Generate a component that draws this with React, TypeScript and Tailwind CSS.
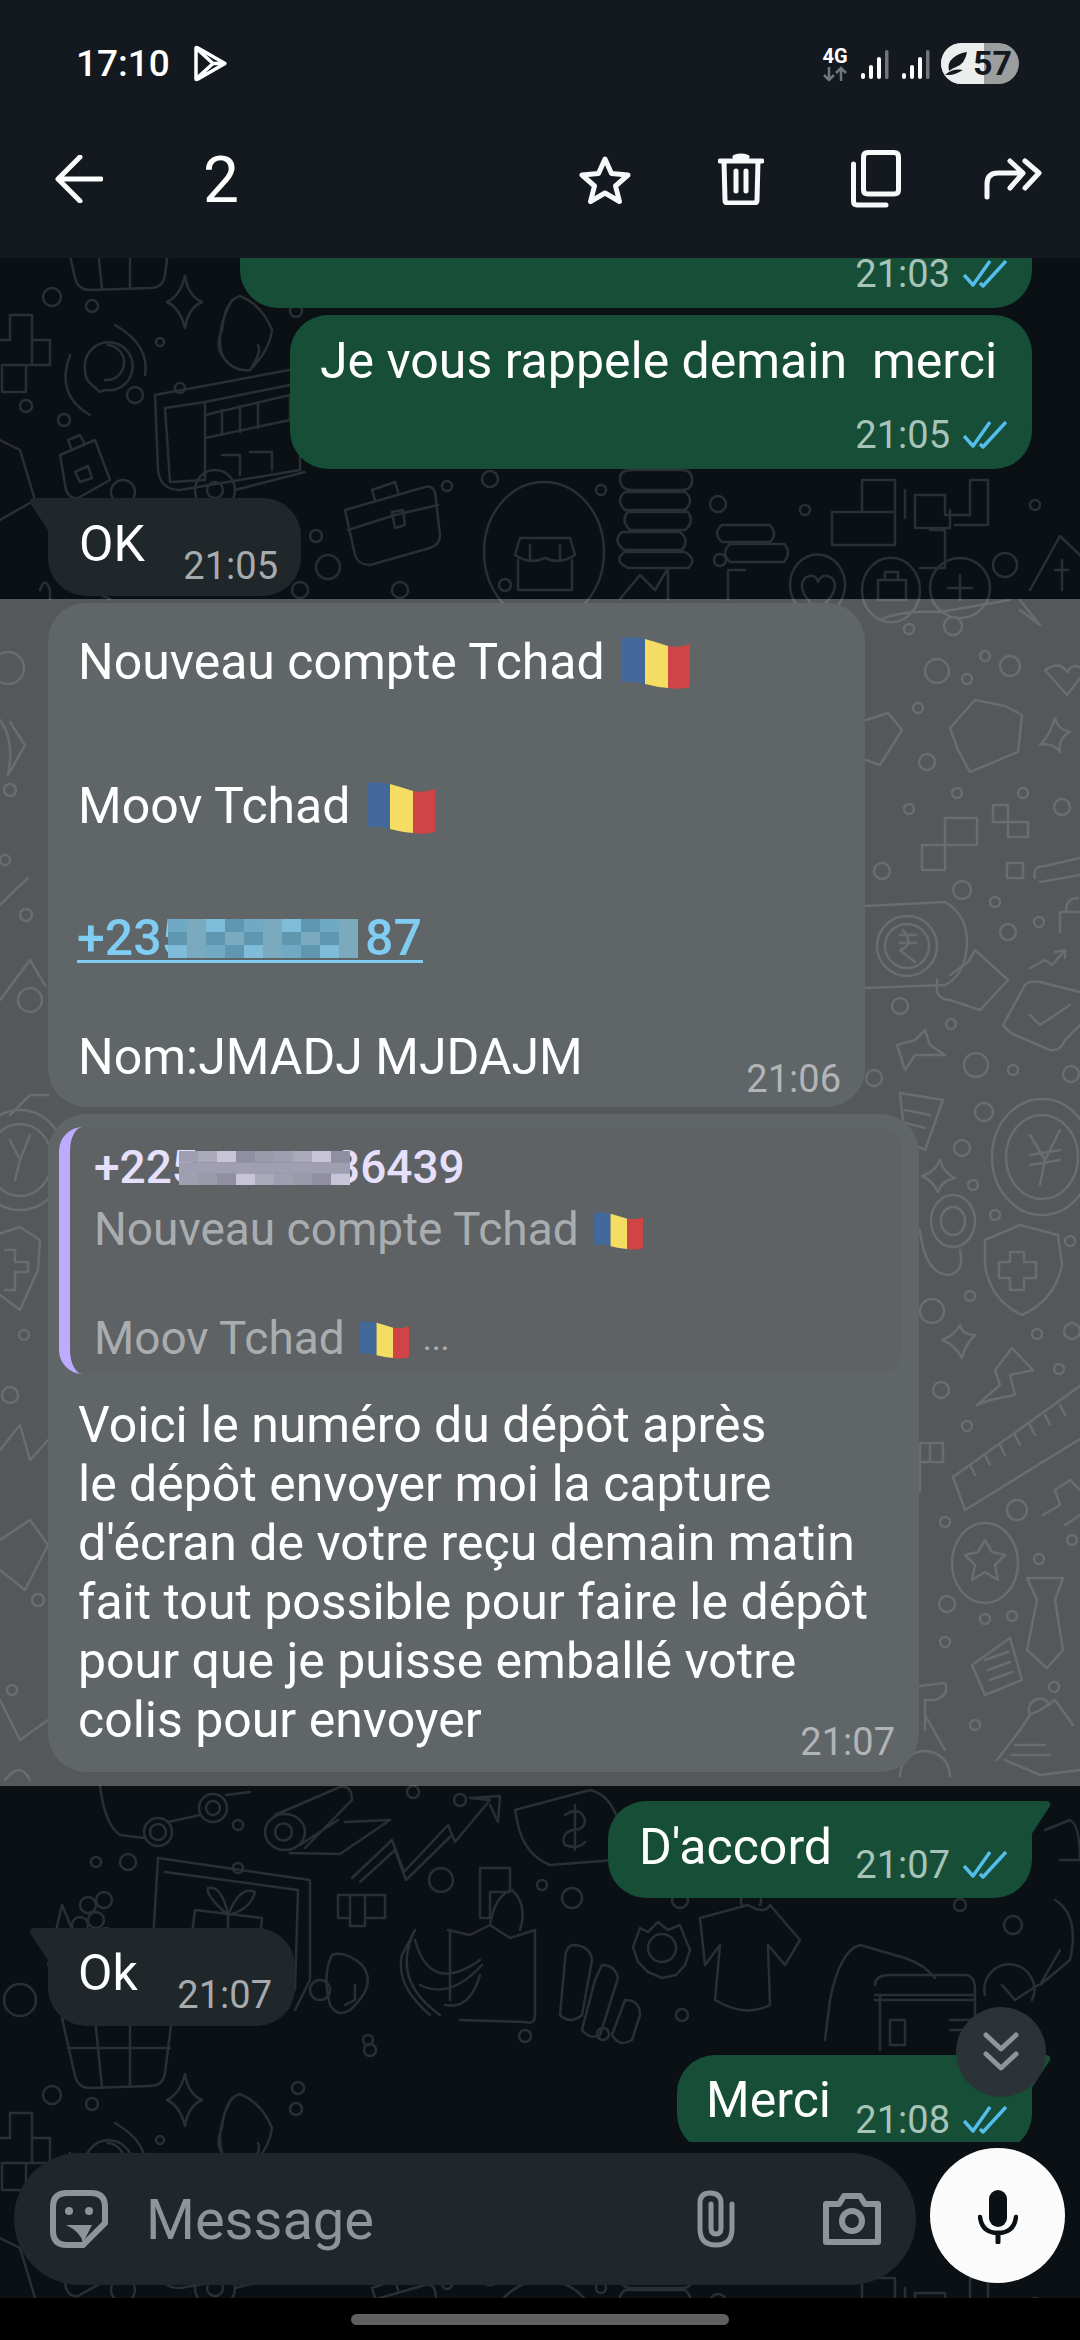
// App.tsx - WhatsApp dark chat with two selected messages
import React from 'react';

// wallpaper doodles, drawn in page coordinates
const TOP_DOTS: number[][] = [
  [52, 297, 9], [92, 306, 6], [296, 311, 6], [26, 406, 6], [64, 420, 6], [135, 395, 8], [123, 492, 12], [316, 536, 6],
  [447, 486, 5], [490, 479, 8], [601, 490, 5], [298, 290, 6], [328, 567, 12], [505, 585, 6], [718, 504, 8], [805, 510, 5], [1035, 505, 5],
  [400, 590, 8], [300, 590, 8], [1005, 565, 12], [260, 540, 6], [160, 342, 4], [180, 388, 5], [720, 560, 6],
];

const TOP_PATHS: string[] = [
  // basket
  'M62 220 L172 220 L165 275 Q163 288 150 288 L90 290 Q78 290 75 278 Z M95 220 L102 289 M130 220 L130 289 M68 250 L170 250',
  // sparkle
  'M185 276 Q188 296 202 302 Q188 308 185 328 Q180 308 167 302 Q180 296 185 276 Z',
  // taco
  'M222 330 Q225 300 240 296 Q262 305 272 330 Q270 350 250 370 Q232 372 222 355 Q215 345 222 330 Z M232 300 Q215 330 222 355 M250 370 Q262 352 258 345',
  // chat bubble with waves
  'M85 370 A24 24 0 1 1 105 390 L100 392 L92 385 Q85 380 85 370 Z M108 345 A8 8 0 0 1 105 380 M115 325 Q150 345 145 375 M70 355 Q55 395 90 415',
  // tetris
  'M10 315 H32 V340 H50 V365 H26 V392 H2 V365 H26 M10 315 V340 H0 M32 340 V365',
  // food truck
  'M155 395 L300 368 L300 470 L180 490 Q160 490 158 470 Z M165 408 L205 402 V480 L170 482 Z M205 402 L290 385 M205 415 L290 395 L290 420 L205 438 Z M222 410 V435 M240 406 V432 M258 403 V428 M222 455 H240 V475 M250 452 H272 V470',
  'M195 490 A20 20 0 1 0 235 490 A20 20 0 1 0 195 490 M207 490 A8 8 0 1 0 223 490 A8 8 0 1 0 207 490 M235 490 L305 472',
  // small case
  'M60 455 L95 440 L110 480 L78 498 Q70 500 66 490 Z M72 450 L68 440 L80 435 L85 444 M75 472 L88 466 L92 478 L80 482 Z',
  // big briefcase
  'M345 510 L425 487 Q432 485 435 492 L440 535 Q440 545 430 548 L370 565 Q358 565 355 555 Z M375 500 L372 490 L395 482 L398 492 M348 530 L395 515 L438 505 M392 512 L403 510 L405 525 L395 528 Z',
  // store badge
  'M484 552 A60 70 0 1 1 604 552 A60 70 0 1 1 484 552 Z M515 555 L520 538 H570 L575 555 Q560 565 545 558 Q530 565 515 555 Z M518 560 V590 H572 V560 M530 545 V560 M560 545 V560',
  // coin stacks
  'M620 478 Q620 470 632 470 H682 Q692 470 692 480 Q692 490 682 490 H632 Q620 490 620 478 Z M625 492 H685 Q695 500 685 510 H625 Q615 500 625 492 Z M628 512 H688 Q695 522 685 530 H630 Q620 520 628 512 Z M622 532 H680 Q690 540 682 550 H624 Q612 540 622 532 Z M625 552 H685 Q698 560 688 568 H628 Q612 560 625 552 Z',
  'M722 525 H770 Q778 535 770 542 H722 Q712 533 722 525 Z M730 544 H784 Q792 552 784 562 H730 Q720 553 730 544 Z',
  // tetris blocks
  'M832 512 H895 V545 H832 Z M862 512 V480 H895 V512 M915 495 H945 V515 H970 V480 H988 V525 H955 M915 495 V528 H950 V510 M905 490 V518 M930 530 H945 V568 H920',
  // heart, gift, plus circles
  'M790 585 A27 30 0 1 1 845 585 A27 30 0 1 1 790 585 M818 610 Q795 590 805 578 Q815 572 818 582 Q822 572 832 578 Q842 590 818 610',
  'M862 590 A27 30 0 1 1 920 590 A27 30 0 1 1 862 590 M878 580 H906 V600 H878 Z M885 580 V572 H898 V580',
  'M930 588 A30 30 0 1 1 990 588 A30 30 0 1 1 930 588 M960 575 V600 M948 588 H972',
  // dollar tag
  'M1030 590 L1060 536 L1085 560 M1062 560 V590 M1055 570 H1068',
  // star crown
  'M620 599 L640 575 L655 590 L668 568 L668 599 M745 570 H728 V599',
  // small doodles at left
  'M0 520 L35 500 L20 450 L0 440 M40 590 Q45 575 50 590 V599 M90 590 L110 599',
];

const LOWER_DOTS: number[][] = [
  [238, 1868, 5], [128, 1862, 8], [96, 1862, 5], [128, 1960, 5], [441, 1880, 12], [238, 1825, 5], [413, 1792, 6], [542, 1885, 5], [572, 1898, 10],
  [680, 1900, 8], [1013, 1925, 9], [682, 2015, 6], [960, 1905, 6], [603, 2034, 6], [370, 2050, 6], [525, 2036, 6], [1000, 1850, 6], [460, 1800, 6],
  [368, 2040, 5], [20, 2000, 16], [320, 1990, 10],
];

const LOWER_PATHS: string[] = [
  // line graph
  'M100 1786 Q105 1825 120 1835 L145 1838 M168 1822 L200 1815 M226 1795 L250 1792',
  'M144 1832 A14 14 0 1 0 172 1832 A14 14 0 1 0 144 1832 M150 1832 A8 8 0 1 0 166 1832 A8 8 0 1 0 150 1832 M199 1808 A14 14 0 1 0 227 1808 A14 14 0 1 0 199 1808 M206 1808 A7 7 0 1 0 220 1808 A7 7 0 1 0 206 1808',
  // roll of cloth
  'M265 1832 A20 18 0 1 0 305 1832 A20 18 0 1 0 265 1832 M275 1832 A8 8 0 1 0 292 1832 A8 8 0 1 0 275 1832 M275 1815 L340 1787 Q352 1785 352 1800 L305 1848 M290 1853 L340 1854 L390 1820 L345 1822 M300 1845 L338 1820',
  // rising arrow
  'M352 1878 L392 1840 L404 1872 L448 1825 L455 1842 L490 1800 L470 1798 L500 1796 L498 1822 L490 1805 M360 1882 L395 1850 L406 1880 L452 1835',
  // receipt with dollar
  'M515 1810 L590 1790 Q610 1795 618 1820 L615 1860 L550 1865 Q525 1855 518 1825 Z M575 1805 V1850 M565 1815 Q580 1805 585 1820 Q585 1830 572 1830 Q560 1835 565 1845 Q578 1850 585 1842',
  // framed gift
  'M158 1858 L310 1880 V1980 L295 2010 M165 1872 L298 1890 L295 1990 M158 1858 L150 1990 M195 1910 L262 1918 L258 1960 L190 1950 Z M228 1915 V1990 M190 1950 L192 1990 M262 1960 L260 1995 M228 1915 Q205 1895 208 1888 Q222 1885 228 1915 Q240 1885 255 1892 Q250 1910 228 1915',
  // grapes and kite
  'M48 1965 L62 1905 L85 1960 M80 1905 A8 8 0 1 1 96 1905 A8 8 0 1 1 80 1905 M96 1900 A8 8 0 1 1 112 1900 A8 8 0 1 1 96 1900 M88 1920 A8 8 0 1 1 104 1920 A8 8 0 1 1 88 1920 M72 1925 A8 8 0 1 1 88 1925 A8 8 0 1 1 72 1925 M98 1936 A8 8 0 1 1 114 1936 A8 8 0 1 1 98 1936',
  // little tetris
  'M338 1895 H385 V1918 H365 V1926 H350 V1918 H338 Z M350 1895 V1918 M365 1895 V1918 M480 1868 H510 V1892 H490 V1918 H480 Z',
  // banana and bag
  'M448 1930 L470 1935 L490 1925 L510 1938 L535 1930 V2015 Q535 2025 525 2022 L460 2020 M450 1930 V2000 M490 1925 Q495 1895 512 1890 Q528 1905 520 1930 M415 1930 Q390 1980 440 2015 M415 1930 L402 1955 Q395 1985 430 2015 M415 1940 Q430 1995 480 1960 M420 1985 Q450 2000 482 1965 M445 2005 Q470 2010 480 1975',
  // loaf and pills
  'M332 1955 Q345 1950 362 1965 Q378 1985 350 2010 Q338 2018 330 2005 Q322 1975 332 1955 Z M345 2005 L355 2000 V1985',
  'M572 1945 Q590 1945 592 1960 L582 2015 Q570 2025 560 2015 L565 1960 Q565 1948 572 1945 Z M602 1965 Q615 1965 618 1978 L600 2035 Q590 2040 582 2030 L595 1980 Z M625 2000 Q640 2000 640 2015 L632 2040 Q620 2048 612 2035 Z',
  // gear
  'M633 1947 L640 1928 L648 1932 L658 1922 L668 1930 L680 1925 L685 1938 L690 1950 L685 1965 L676 1975 L662 1978 L648 1972 L638 1962 Z M648 1948 A14 14 0 1 0 676 1948 A14 14 0 1 0 648 1948',
  // t-shirt
  'M700 1918 L748 1905 Q765 1915 770 1905 L800 1940 L785 1965 L768 1945 L770 2005 Q745 2018 715 2000 L720 1945 L705 1965 Z M742 1905 A10 10 0 1 1 760 1905',
  // phone and card
  'M830 2000 Q840 1950 860 1945 L905 1958 Q925 1965 935 1978 M830 2000 L825 2040 M880 1995 V2050 M875 1985 Q875 1975 890 1975 H965 Q975 1975 975 1990 V2050 M875 2000 H975 M875 1995 H975 M890 2020 H905 V2045 H890 Z M950 2020 H975 M950 2030 H970',
  // clock tag
  'M985 1995 A25 25 0 1 1 1032 2000 M1002 1985 L1015 2000 L1038 1985',
  // right side leaf
  'M1055 1900 Q1080 1915 1070 1960 L1040 1985 L1060 1950 M1045 1830 L1070 1820 Q1080 1825 1080 1860 L1060 1860',
];

// parts of the wallpaper seen through the selected band
const BAND_DOTS: number[][] = [
  [909, 629, 5], [953, 626, 9], [937, 671, 12], [967, 679, 5], [985, 656, 5], [1010, 666, 10], [918, 708, 5], [927, 762, 8],
  [909, 809, 5], [957, 793, 5], [1023, 793, 5], [1062, 807, 8], [882, 871, 8], [962, 890, 9], [995, 902, 5], [1008, 932, 8], [1039, 922, 5],
  [900, 1006, 8], [951, 1024, 5], [976, 1065, 12], [1013, 1070, 5], [1071, 1074, 8], [874, 1078, 8], [984, 1112, 9], [962, 1148, 8], [973, 1185, 5],
  [995, 1215, 5], [1070, 1241, 5], [970, 1296, 5], [932, 1311, 12], [1037, 1334, 5], [1072, 1331, 8], [941, 1390, 8], [1059, 1369, 5], [967, 1426, 5],
  [1017, 1510, 10], [1072, 1540, 5], [945, 1522, 5], [1039, 1559, 5], [947, 1604, 8], [985, 1619, 5], [1012, 1616, 5], [945, 1642, 5], [1054, 1687, 5], [975, 1725, 5],
  [8, 668, 16], [10, 790, 6], [26, 915, 6], [24, 1335, 5], [10, 1395, 8], [30, 1000, 12], [5, 860, 5], [38, 1600, 6], [12, 1690, 5],
];

const BAND_PATHS: string[] = [
  // scissors and heart, top right
  'M880 620 Q900 610 940 612 L1010 600 M1020 600 L1040 625 L1020 610 M1045 670 Q1060 660 1067 672 Q1075 660 1085 672 L1067 695 Z',
  // folder
  'M950 728 L975 700 L1005 706 L1022 715 L1018 752 L970 772 L958 750 Z',
  // sparkle
  'M1055 718 Q1058 730 1070 732 Q1058 738 1060 752 Q1052 742 1040 745 Q1050 735 1055 718 Z',
  // tag
  'M866 720 L888 713 L902 730 L880 765 L866 760',
  // tetris
  'M922 845 H945 V870 H922 Z M945 845 V818 H977 V845 H945 M993 805 H1008 V822 H1028 V837 H1008 V822 H993 Z M1007 863 H1023 V878 H1007 Z',
  // thermometer and lock
  'M1035 878 Q1032 866 1045 866 L1080 858 M1040 882 L1080 875 M1060 932 V912 H1080 M1066 912 Q1066 898 1078 898',
  // rupee tag
  'M865 906 L945 902 Q968 915 967 945 Q965 975 945 985 L865 988 M877 946 A30 30 0 1 0 937 946 A30 30 0 1 0 877 946 M885 946 A22 22 0 1 0 929 946 A22 22 0 1 0 885 946 M900 935 H916 M900 943 H916 M903 930 Q915 945 900 950 L915 962',
  // arrow card
  'M937 980 V992 Q940 1000 950 1000 L980 1010 L1008 980 L975 950 L968 962 L950 975',
  // check card
  'M1003 1025 L1025 985 Q1030 980 1040 982 L1080 992 M1003 1025 Q1008 1032 1015 1035 L1050 1050 Q1060 1052 1065 1040 L1080 1025 M1030 1015 L1040 1025 L1070 1005',
  'M1030 968 L1045 960 L1052 965 L1065 950 M1055 952 L1065 950 L1065 958',
  // bottle pin
  'M897 1045 L915 1040 L925 1030 L930 1045 L945 1055 L915 1055 L905 1070 Z',
  // receipt
  'M900 1093 L943 1100 L925 1150 L905 1140 Z M905 1110 L930 1115 M902 1122 L925 1128',
  // yen coin
  'M992 1157 A50 58 0 1 0 1092 1157 A50 58 0 1 0 992 1157 M1006 1157 A36 42 0 1 0 1078 1157 A36 42 0 1 0 1006 1157 M1030 1135 L1045 1160 L1060 1130 M1045 1160 L1040 1185 M1030 1155 L1060 1150 M1030 1165 L1060 1160',
  // sparkles
  'M922 1176 Q935 1172 940 1160 Q943 1172 955 1178 Q942 1180 938 1192 Q932 1180 922 1176 Z M942 1340 Q955 1335 960 1325 Q962 1335 975 1335 Q965 1345 962 1358 Q955 1345 942 1340 Z',
  // target blob
  'M931 1221 A22 26 0 1 0 975 1221 A22 26 0 1 0 931 1221 M941 1221 A12 14 0 1 0 965 1221 A12 14 0 1 0 941 1221 M920 1230 Q925 1275 950 1275 Q965 1270 960 1250',
  // shield plus
  'M985 1240 L1020 1225 L1058 1235 L1062 1265 Q1055 1300 1022 1315 Q990 1300 985 1265 Z M1010 1252 H1024 V1262 H1036 V1278 H1024 V1290 H1010 V1278 H999 V1262 H1010 Z',
  // push pin
  'M977 1405 L1000 1385 L995 1370 L1012 1348 L1033 1370 L1010 1375 L1015 1395 L990 1400 Z',
  // ruler
  'M953 1477 L1080 1386 M965 1510 L1080 1439 M953 1477 L965 1510 M970 1465 L975 1475 M985 1455 L990 1465 M1000 1445 L1005 1455 M1015 1435 L1020 1445 M1030 1425 L1035 1435 M1045 1415 L1050 1425 M1060 1405 L1065 1415',
  // flag tetris
  'M920 1462 H943 V1443 H920 V1491 M930 1443 V1462',
  // pin small
  'M1043 1515 L1060 1505 L1055 1490 L1070 1480 L1080 1490 M1065 1525 L1080 1515',
  // star coin
  'M952 1563 A33 40 0 1 0 1018 1563 A33 40 0 1 0 952 1563 M985 1540 L992 1552 L1005 1555 L995 1565 L998 1580 L985 1572 L972 1580 L975 1565 L965 1555 L978 1552 Z',
  // tie
  'M1027 1578 H1063 L1055 1600 L1063 1650 L1047 1668 L1027 1650 L1037 1600 Z',
  // list receipt
  'M972 1665 L1010 1638 L1022 1680 L985 1695 Z M985 1660 L1008 1652 M988 1670 L1010 1662 M990 1680 L1012 1672',
  // bottle
  'M997 1760 L1020 1730 L1030 1715 L1040 1710 L1055 1700 L1073 1725 M1030 1715 A8 8 0 1 1 1050 1705 M1005 1760 L1040 1775 L1080 1770 M1015 1745 H1045 M1012 1755 H1050',
  // scooter
  'M920 1686 L945 1683 Q950 1695 935 1700 L925 1700 V1730 M900 1776 A25 25 0 0 1 950 1776 M925 1715 L945 1750',
  // left side shapes
  'M0 1000 L30 960 L45 985 M10 1115 L30 1095 L48 1095 M0 720 Q15 740 8 775 L25 745 L10 722 M0 905 L15 890 L28 878',
  'M-25 1160 A45 50 0 1 0 65 1160 A45 50 0 1 0 -25 1160 M-12 1160 A32 36 0 1 0 52 1160 A32 36 0 1 0 -12 1160 M10 1140 L20 1160 L30 1135 M20 1160 L15 1180',
  'M-5 1235 L20 1227 L40 1240 L38 1270 L20 1310 L0 1295 M5 1250 H15 V1262 H28 V1272 H15 V1290 H5',
  'M0 1450 L20 1425 L30 1460 L48 1440 M0 1540 L30 1520 L48 1545 L25 1590 L0 1570 M0 1700 L20 1740 L48 1720 M5 1780 Q20 1760 30 1780',
];

function Doodles({ dots, paths }: { dots: number[][]; paths: string[] }) {
  return (
    <>
      {paths.map((d, i) => (
        <path key={i} d={d} />
      ))}
      {dots.map(([cx, cy, r], i) => (
        <circle key={i} cx={cx} cy={cy} r={r} />
      ))}
    </>
  );
}

function Wallpaper() {
  return (
    <svg className="absolute inset-0 w-full h-full" viewBox="0 258 1080 2040" fill="none" stroke="#2a2f33" strokeWidth="2.5" strokeLinejoin="round" strokeLinecap="round">
      <Doodles dots={TOP_DOTS} paths={TOP_PATHS} />
      <Doodles dots={LOWER_DOTS} paths={LOWER_PATHS} />
      <Doodles dots={BAND_DOTS} paths={BAND_PATHS} />
      <g transform="translate(0 1798)">
        <Doodles dots={TOP_DOTS} paths={TOP_PATHS} />
      </g>
    </svg>
  );
}

// blurred out digits in the phone numbers
function Mosaic({ w, h, cols, rows, colors, className }: { w: number; h: number; cols: number; rows: number; colors: string[]; className?: string }) {
  const cells = [];
  for (let c = 0; c < cols; c++) {
    for (let r = 0; r < rows; r++) {
      cells.push(<rect key={c + '-' + r} x={c} y={r} width="1.02" height="1.02" fill={colors[(c * 7 + r * 5 + c * r * 3) % colors.length]} />);
    }
  }
  return (
    <svg width={w} height={h} viewBox={`0 0 ${cols} ${rows}`} preserveAspectRatio="none" className={className}>
      {cells}
    </svg>
  );
}

function ChadFlag({ className }: { className: string }) {
  return (
    <svg viewBox="0 0 68 52" className={className}>
      <path d="M0 1 Q10 -1 23 2 V47 Q10 44 0 45 Z" fill="#43689a" />
      <path d="M23 2 Q34 5 46 9 V51 Q34 50 23 47 Z" fill="#f4dd62" />
      <path d="M46 9 Q58 11 68 7 V50 Q58 53 46 51 Z" fill="#cf4545" />
    </svg>
  );
}

function Ticks() {
  return (
    <svg width="44" height="28" viewBox="0 0 44 28" fill="none" stroke="#53bdeb" strokeWidth="3.5" strokeLinejoin="round" className="ml-[13px]">
      <path d="M1 15 L10 25 L27 1" />
      <path d="M17 23 L20 26 L43 1" />
    </svg>
  );
}

function SentMeta({ time }: { time: string }) {
  return (
    <div className="flex items-center">
      <span className="text-[38px] leading-[44px] text-[#a6c4b7]">{time}</span>
      <Ticks />
    </div>
  );
}

function Tail({ side, color }: { side: 'left' | 'right'; color: string }) {
  if (side === 'right') {
    return (
      <svg width="20" height="34" viewBox="0 0 20 34" className="absolute top-0 -right-[19px]" fill={color}>
        <path d="M0 0 H15 Q20 0 19 5 L0 34 Z" />
      </svg>
    );
  }
  return (
    <svg width="20" height="34" viewBox="0 0 20 34" className="absolute top-0 -left-[19px]" fill={color}>
      <path d="M20 0 H5 Q0 0 1 5 L20 34 Z" />
    </svg>
  );
}

const BODY_LINES = [
  'Voici le numéro du dépôt après',
  'le dépôt envoyer moi la capture',
  "d'écran de votre reçu demain matin",
  'fait tout possible pour faire le dépôt',
  'pour que je puisse emballé votre',
];

function MessageList() {
  return (
    <div className="relative h-[1884px] overflow-hidden text-[50px] leading-[59px] text-white">
      {/* cut off bubble at the top */}
      <div className="flex justify-end pr-[48px]">
        <div className="w-[792px] h-[50px] rounded-b-[38px] bg-[#164e38] flex items-start justify-end pr-[25px]">
          <div className="flex items-center mt-[2px]">
            <span className="text-[38px] leading-[28px] text-[#a6c4b7]">21:03</span>
            <Ticks />
          </div>
        </div>
      </div>

      <div className="flex justify-end pr-[48px] mt-[7px]">
        <div className="w-[742px] h-[154px] rounded-[38px] bg-[#164e38] pl-[30px] pr-[25px] pt-[17px]">
          <div className="whitespace-pre">Je vous rappele demain  merci</div>
          <div className="flex justify-end mt-[22px]">
            <SentMeta time="21:05" />
          </div>
        </div>
      </div>

      <div className="pl-[48px] mt-[29px]">
        <div className="relative w-[253px] h-[98px] rounded-[38px] rounded-tl-none bg-[#1f272a] pl-[31px] pr-[23px] flex justify-between">
          <Tail side="left" color="#1f272a" />
          <span className="mt-[17px]">OK</span>
          <span className="mt-[46px] text-[38px] leading-[44px] text-[#a8abad]">21:05</span>
        </div>
      </div>

      {/* selected messages */}
      <div className="mt-[3px] h-[1187px] bg-white/30 pl-[48px] pt-[4px] flex flex-col gap-[7px]">
        <div className="w-[817px] h-[504px] shrink-0 rounded-[38px] bg-[#606568] pl-[30px] pr-[24px] pt-[30px]">
          <div className="flex items-start">
            <span>Nouveau compte Tchad</span>
            <ChadFlag className="w-[68px] h-[52px] ml-[17px] mt-[4px]" />
          </div>
          <div className="flex items-start mt-[85px]">
            <span>Moov Tchad</span>
            <ChadFlag className="w-[68px] h-[52px] ml-[16px] mt-[5px]" />
          </div>
          <div className="mt-[73px] -ml-[1px] w-[346px] h-[54px] flex font-medium text-[#7fcdf2] border-b-[3px] border-[#7fcdf2]">
            <span>+235</span>
            <Mosaic w={190} h={39} cols={10} rows={3} colors={['#6fa9c4', '#5f96b0', '#7fbcd9', '#7ba9be']} className="relative z-10 -ml-[22px] mt-[10px]" />
            <span className="ml-[7px]">87</span>
          </div>
          <div className="flex justify-between mt-[65px]">
            <span>Nom:JMADJ MJDAJM</span>
            <span className="mt-[29px] text-[38px] leading-[44px] text-[#b2b5b7]">21:06</span>
          </div>
        </div>

        <div className="w-[871px] h-[658px] shrink-0 rounded-[38px] bg-[#606568] pl-[11px] pr-[17px] pt-[13px]">
          <div className="h-[247px] rounded-[24px] bg-[#5e6265] border-l-[11px] border-[#bcabff] pl-[24px] pt-[13px] text-[46px] leading-[54px]">
            <div className="flex font-medium text-[#e6e0fd]">
              <span>+225</span>
              <Mosaic w={171} h={34} cols={9} rows={3} colors={['#9f9fb1', '#8f8fa1', '#a9a9ba', '#9a9aab', '#c6c4d6']} className="relative z-10 -ml-[19px] mt-[11px]" />
              <span className="-ml-[16px]">36439</span>
            </div>
            <div className="flex items-start mt-[8px] text-[#a9adaf]">
              <span>Nouveau compte Tchad</span>
              <ChadFlag className="w-[49px] h-[38px] ml-[15px] mt-[10px]" />
            </div>
            <div className="flex items-start mt-[55px] text-[#a9adaf]">
              <span>Moov Tchad</span>
              <ChadFlag className="w-[49px] h-[38px] ml-[15px] mt-[10px]" />
              <span className="ml-[14px] text-[34px]">...</span>
            </div>
          </div>
          <div className="pl-[19px] pr-[7px] mt-[22px] whitespace-nowrap">
            {BODY_LINES.map((line) => (
              <div key={line}>{line}</div>
            ))}
            <div className="flex justify-between">
              <span>colis pour envoyer</span>
              <span className="mt-[29px] text-[38px] leading-[44px] text-[#b2b5b7]">21:07</span>
            </div>
          </div>
        </div>
      </div>

      <div className="flex justify-end pr-[48px] mt-[15px]">
        <div className="relative w-[424px] h-[97px] rounded-[38px] rounded-tr-none bg-[#164e38] pl-[31px] pr-[25px] flex justify-between">
          <Tail side="right" color="#164e38" />
          <span className="mt-[17px]">D'accord</span>
          <div className="mt-[42px]">
            <SentMeta time="21:07" />
          </div>
        </div>
      </div>

      <div className="pl-[48px] mt-[30px]">
        <div className="relative w-[247px] h-[98px] rounded-[38px] rounded-tl-none bg-[#1f272a] pl-[30px] pr-[23px] flex justify-between">
          <Tail side="left" color="#1f272a" />
          <span className="mt-[16px]">Ok</span>
          <span className="mt-[45px] text-[38px] leading-[44px] text-[#a8abad]">21:07</span>
        </div>
      </div>

      <div className="flex justify-end pr-[48px] mt-[29px]">
        <div className="relative w-[355px] h-[97px] rounded-[38px] rounded-tr-none bg-[#164e38] pl-[29px] pr-[25px] flex justify-between">
          <Tail side="right" color="#164e38" />
          <span className="mt-[16px]">Merci</span>
          <div className="mt-[43px]">
            <SentMeta time="21:08" />
          </div>
        </div>
      </div>
    </div>
  );
}

function StatusBar() {
  return (
    <div className="h-[86px] flex items-start pl-[76px] pr-[61px] pt-[43px]">
      <span className="text-[37px] leading-[43px] font-medium text-white -mt-[1px]">17:10</span>
      <svg width="35" height="37" viewBox="0 0 35 37" fill="none" stroke="white" strokeWidth="3.5" strokeLinejoin="round" className="ml-[23px] mt-[2px]">
        <path d="M3 3 Q3 2 5 3 L32 18.5 L5 34 Q3 35 3 34 Z M3 3 L20 18.5 L3 34 M20 18.5 L30 18.5" />
      </svg>
      <div className="ml-auto flex items-start">
        <div className="w-[26px] flex flex-col items-center mt-[4px]">
          <span className="text-[20px] leading-[18px] font-bold text-white">4G</span>
          <svg width="26" height="16" viewBox="0 0 26 16" fill="none" stroke="#71767a" strokeWidth="2.5" className="mt-[1px]">
            <path d="M7 1 V14 M2 9 L7 14 L12 9" />
            <path d="M19 15 V2 M14 7 L19 2 L24 7" />
          </svg>
        </div>
        <svg width="28" height="30" viewBox="0 0 28 30" className="ml-[13px] mt-[7px]">
          <rect x="0" y="23" width="4" height="6" rx="2" fill="white" />
          <rect x="8" y="15" width="4" height="14" rx="2" fill="white" />
          <rect x="16" y="7" width="4" height="22" rx="2" fill="white" />
          <rect x="24" y="0" width="3.5" height="29" rx="1.5" fill="#70757a" />
        </svg>
        <svg width="28" height="30" viewBox="0 0 28 30" className="ml-[13px] mt-[7px]">
          <rect x="0" y="23" width="4" height="6" rx="2" fill="white" />
          <rect x="8" y="15" width="4" height="14" rx="2" fill="white" />
          <rect x="16" y="7" width="4" height="22" rx="2" fill="white" />
          <rect x="24" y="0" width="3.5" height="29" rx="1.5" fill="#70757a" />
        </svg>
        <div className="relative w-[78px] h-[41px] ml-[11px] rounded-full overflow-hidden flex items-center bg-[#9b9d9f]">
          <div className="absolute left-0 top-0 bottom-0 w-[43px] bg-[#eceeee]" />
          <svg width="22" height="26" viewBox="0 0 22 26" fill="#15191c" className="relative ml-[4px]">
            <path d="M22 1 Q20 13 11 16 Q8 17 4 20 Q2 12 8 7 Q14 2 22 1 Z M0 24 Q8 17 18 19 Q10 24 4 24 Z" />
          </svg>
          <span className="relative ml-[6px] text-[34px] leading-[41px] font-bold text-[#15191c]">57</span>
        </div>
      </div>
    </div>
  );
}

function Toolbar() {
  return (
    <div className="h-[172px] pt-[14px] flex items-center">
      <svg width="48" height="48" viewBox="0 0 48 48" fill="none" stroke="white" strokeWidth="5" strokeLinecap="round" strokeLinejoin="round" className="ml-[55px]">
        <path d="M46 24 H4 M25 2 L3 24 L25 46" />
      </svg>
      <span className="ml-[100px] text-[64px] leading-[75px] text-white mt-[2px]">2</span>
      <svg width="52" height="48" viewBox="0 0 52 48" fill="none" stroke="#f6f8fa" strokeWidth="5" strokeLinejoin="round" className="ml-[340px] mt-[2px]">
        <path d="M26 3 L32.5 17.5 L49 19 L36.5 30 L40.5 45.5 L26 37 L11.5 45.5 L15.5 30 L3 19 L19.5 17.5 Z" />
      </svg>
      <svg width="46" height="52" viewBox="0 0 46 52" fill="none" stroke="#f6f8fa" strokeWidth="5" strokeLinecap="round" strokeLinejoin="round" className="ml-[87px]">
        <path d="M2 8 H44 M17 4 Q23 2 29 4 M6 8 L7 47 Q7 50 10 50 H36 Q39 50 39 47 L40 8 M18 18 V38 M28 18 V38" />
      </svg>
      <svg width="50" height="58" viewBox="0 0 50 58" fill="none" stroke="#f6f8fa" strokeWidth="5" strokeLinecap="round" strokeLinejoin="round" className="ml-[87px]">
        <path d="M17 2.5 H43 Q47.5 2.5 47.5 7 V40 Q47.5 44 43 44 H17 Q12.5 44 12.5 40 V7 Q12.5 2.5 17 2.5 Z" />
        <path d="M2.5 14 V51 Q2.5 55 6 55 H35" />
      </svg>
      <svg width="58" height="42" viewBox="0 0 58 42" fill="none" stroke="#f6f8fa" strokeWidth="5" strokeLinecap="round" strokeLinejoin="round" className="ml-[83px]">
        <path d="M3 39 V26 Q3 15 14 15 H38 M26 3 L39 15 L26 30" />
        <path d="M41 3 L55 15 L41 30" />
      </svg>
    </div>
  );
}

function Composer() {
  return (
    <div className="relative flex items-start pl-[14px] pt-[6px]">
      <div className="w-[902px] h-[132px] mt-[5px] rounded-full bg-[#1f272a] flex items-center pl-[36px] pr-[35px] text-[#8d9599]">
        <svg width="58" height="58" viewBox="0 0 58 58" fill="none" stroke="#8d9599" strokeWidth="6">
          <path d="M17 3 H41 Q55 3 55 17 V33 L33 55 H17 Q3 55 3 41 V17 Q3 3 17 3 Z" />
          <circle cx="19" cy="21" r="4" fill="#8d9599" stroke="none" />
          <circle cx="39" cy="21" r="4" fill="#8d9599" stroke="none" />
          <path d="M16 35 L42 35 L33 53 Q31 42 16 35 Z" fill="#8d9599" stroke="none" />
        </svg>
        <span className="ml-[38px] text-[56px] leading-[60px] mt-[2px]">Message</span>
        <svg width="38" height="58" viewBox="0 0 38 58" fill="none" stroke="#8d9599" strokeWidth="5" strokeLinecap="round" className="ml-auto">
          <path d="M35 14 V39 Q35 55 19 55 Q3 55 3 39 V13 Q3 3 13 3 Q24 3 24 13 V38 Q24 44 19 44 Q14 44 14 38 V14" />
        </svg>
        <svg width="58" height="52" viewBox="0 0 58 52" fill="none" stroke="#8d9599" strokeWidth="6" strokeLinejoin="round" className="ml-[88px]">
          <path d="M3 11 H16 L21 3 H37 L42 11 H55 V49 H3 Z" />
          <circle cx="29" cy="28" r="10" />
        </svg>
      </div>
      <div className="w-[135px] h-[135px] ml-[14px] rounded-full bg-[#fbfbfb] flex items-center justify-center">
        <svg width="40" height="54" viewBox="0 0 40 54" fill="none" className="mt-[2px]">
          <rect x="11" y="0" width="18" height="37" rx="9" fill="#0b1014" />
          <path d="M2 27 Q4 43 20 43 Q36 43 38 27" stroke="#0b1014" strokeWidth="4.5" strokeLinecap="round" />
          <path d="M20 43 V52" stroke="#0b1014" strokeWidth="5" strokeLinecap="round" />
        </svg>
      </div>
    </div>
  );
}

export default function App() {
  return (
    <div className="w-[1080px] h-[2340px] flex flex-col bg-black font-[Roboto,sans-serif] overflow-hidden">
      <div className="bg-[#13191e]">
        <StatusBar />
        <Toolbar />
      </div>

      <div className="relative h-[2040px] bg-[#0b1014]">
        <Wallpaper />
        <MessageList />
        <Composer />
        {/* scroll to bottom button */}
        <div className="absolute left-[956px] top-[1749px] w-[90px] h-[90px] rounded-full bg-[#2b3339] flex items-center justify-center">
          <svg width="36" height="40" viewBox="0 0 36 40" fill="none" stroke="#8d9599" strokeWidth="5" strokeLinecap="round" strokeLinejoin="round">
            <path d="M3 3 L18 17 L33 3 M3 22 L18 36 L33 22" />
          </svg>
        </div>
      </div>

      <div className="flex-1 flex items-start justify-center pt-[16px]">
        <div className="w-[378px] h-[11px] rounded-full bg-[#5f5f5f]" />
      </div>
    </div>
  );
}
